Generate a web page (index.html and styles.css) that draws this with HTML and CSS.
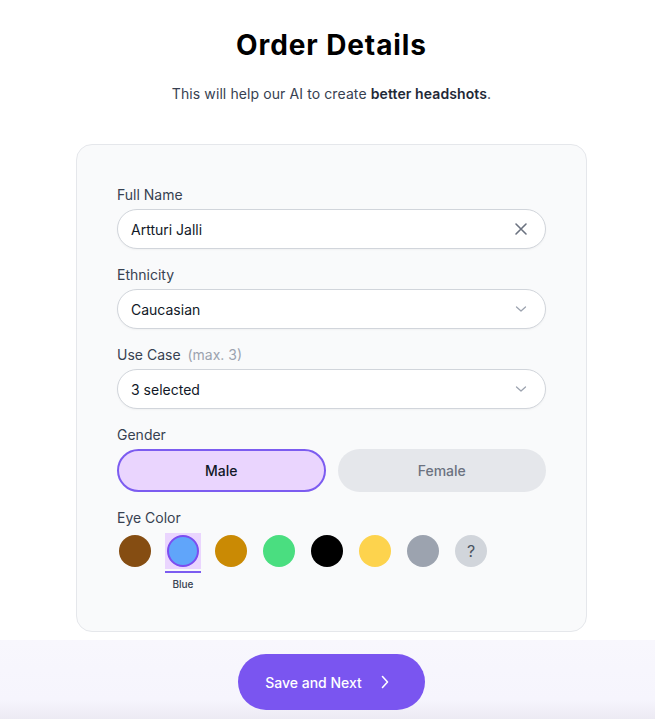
FILE: index.html
```html
<!DOCTYPE html>
<html lang="en">
<head>
    <meta charset="UTF-8">
    <meta name="viewport" content="width=device-width, initial-scale=1.0">
    <title>Order Details</title>
    <link rel="stylesheet" href="styles.css">
</head>
<body>

<div class="page">
    <h1>Order Details</h1>
    <p class="subtitle">This will help our AI to create <strong>better headshots</strong>.</p>

    <div class="card">
        <div class="field">
            <label>Full Name</label>
            <div class="input">
                <span>Artturi Jalli</span>
                <svg class="clear" width="14" height="14" viewBox="0 0 14 14"><path d="M2 2l10 10M12 2L2 12" stroke="#6b7280" stroke-width="1.6" stroke-linecap="round" fill="none"/></svg>
            </div>
        </div>

        <div class="field">
            <label>Ethnicity</label>
            <div class="input">
                <span>Caucasian</span>
                <svg class="chev" width="12" height="8" viewBox="0 0 12 8"><path d="M1.5 2l4.5 4 4.5-4" stroke="#9ca3af" stroke-width="1.3" stroke-linecap="round" stroke-linejoin="round" fill="none"/></svg>
            </div>
        </div>

        <div class="field">
            <label>Use Case <span class="hint">(max. 3)</span></label>
            <div class="input">
                <span>3 selected</span>
                <svg class="chev" width="12" height="8" viewBox="0 0 12 8"><path d="M1.5 2l4.5 4 4.5-4" stroke="#9ca3af" stroke-width="1.3" stroke-linecap="round" stroke-linejoin="round" fill="none"/></svg>
            </div>
        </div>

        <div class="field">
            <label>Gender</label>
            <div class="toggle">
                <button class="opt active">Male</button>
                <button class="opt">Female</button>
            </div>
        </div>

        <div class="field eyes">
            <label>Eye Color</label>
            <div class="swatches">
                <div class="swatch"><span class="dot" style="background:#854d12"></span></div>
                <div class="swatch selected">
                    <span class="box"><span class="dot" style="background:#60a5fa"></span></span>
                    <span class="bar"></span>
                    <span class="name">Blue</span>
                </div>
                <div class="swatch"><span class="dot" style="background:#ca8a04"></span></div>
                <div class="swatch"><span class="dot" style="background:#4ade80"></span></div>
                <div class="swatch"><span class="dot" style="background:#000000"></span></div>
                <div class="swatch"><span class="dot" style="background:#fdd34d"></span></div>
                <div class="swatch"><span class="dot" style="background:#9ca3af"></span></div>
                <div class="swatch"><span class="dot unknown">?</span></div>
            </div>
        </div>
    </div>
</div>

<div class="footer">
    <button class="next">Save and Next
        <svg width="10" height="14" viewBox="0 0 10 14"><path d="M2.5 1.5l5 5.5-5 5.5" stroke="#fff" stroke-width="1.6" stroke-linecap="round" stroke-linejoin="round" fill="none"/></svg>
    </button>
</div>

</body>
</html>
```

FILE: styles.css
```css
body {
    margin: 0;
    font-family: Inter, "Noto Sans", Arial, sans-serif;
    background: #fff;
    color: #111827;
}
.page {
    padding: 28px 0 120px 8px;
    display: flex;
    flex-direction: column;
    align-items: center;
}
h1 {
    margin: 0;
    font-size: 28px;
    line-height: 34px;
    font-weight: 700;
    letter-spacing: 0.9px;
    color: #000;
}
.subtitle {
    margin: 22px 0 40px;
    font-size: 14px;
    line-height: 20px;
    letter-spacing: 0.1px;
    color: #374151;
}
.subtitle strong {
    font-weight: 600;
    color: #1f2937;
}
.card {
    width: 429px;
    padding: 40px;
    background: #f9fafb;
    border: 1px solid #e5e7eb;
    border-radius: 16px;
    display: flex;
    flex-direction: column;
    gap: 16px;
}
.field label {
    display: block;
    font-size: 14px;
    line-height: 20px;
    color: #374151;
    margin-bottom: 4px;
}
.hint {
    color: #9ca3af;
    margin-left: 3px;
}
.input {
    height: 38px;
    border: 1px solid #d1d5db;
    border-radius: 20px;
    background: #fff;
    display: flex;
    align-items: center;
    justify-content: space-between;
    padding: 0 18px 0 13px;
    font-size: 14px;
    color: #111827;
    box-shadow: 0 1px 2px rgba(0, 0, 0, 0.04);
}
.clear {
    margin-right: -1px;
}
.toggle {
    display: flex;
    gap: 12px;
}
.opt {
    flex: 1;
    height: 43px;
    border: 2px solid transparent;
    border-radius: 22px;
    background: #e5e7eb;
    font-family: inherit;
    font-size: 14px;
    font-weight: 500;
    color: #6b7280;
}
.opt.active {
    background: #ead5fe;
    border-color: #7c5cf0;
    color: #111827;
}
.eyes label {
    margin-bottom: 5px;
}
.swatches {
    display: flex;
    gap: 12px;
}
.swatch {
    width: 36px;
    display: flex;
    flex-direction: column;
    align-items: center;
}
.swatch > .dot {
    margin-top: 2px;
}
.dot {
    width: 32px;
    height: 32px;
    border-radius: 50%;
    display: flex;
    align-items: center;
    justify-content: center;
    box-sizing: border-box;
}
.box {
    width: 36px;
    height: 36px;
    background: #ead5fe;
    display: flex;
    align-items: center;
    justify-content: center;
}
.selected .dot {
    border: 2px solid #7c4df0;
}
.bar {
    width: 36px;
    height: 2px;
    margin-top: 2px;
    background: #7c5cf0;
}
.name {
    margin-top: 4px;
    font-size: 10px;
    line-height: 14px;
    font-weight: 500;
    color: #374151;
}
.unknown {
    background: #d1d5db;
    color: #4b5563;
    font-size: 16px;
}
.footer {
    position: fixed;
    left: 0;
    right: 0;
    bottom: 0;
    height: 79px;
    padding-left: 8px;
    display: flex;
    justify-content: center;
    align-items: flex-start;
    background: linear-gradient(180deg, #f8f7fd 0%, #f6f5fd 75%, #eceaf3 100%);
}
.next {
    margin-top: 14px;
    width: 187px;
    height: 56px;
    border: none;
    border-radius: 28px;
    background: #7a55f0;
    color: #fff;
    font-family: inherit;
    font-size: 14px;
    font-weight: 500;
    display: flex;
    align-items: center;
    justify-content: center;
    gap: 18px;
    padding: 0 8px 0 0;
}
```
